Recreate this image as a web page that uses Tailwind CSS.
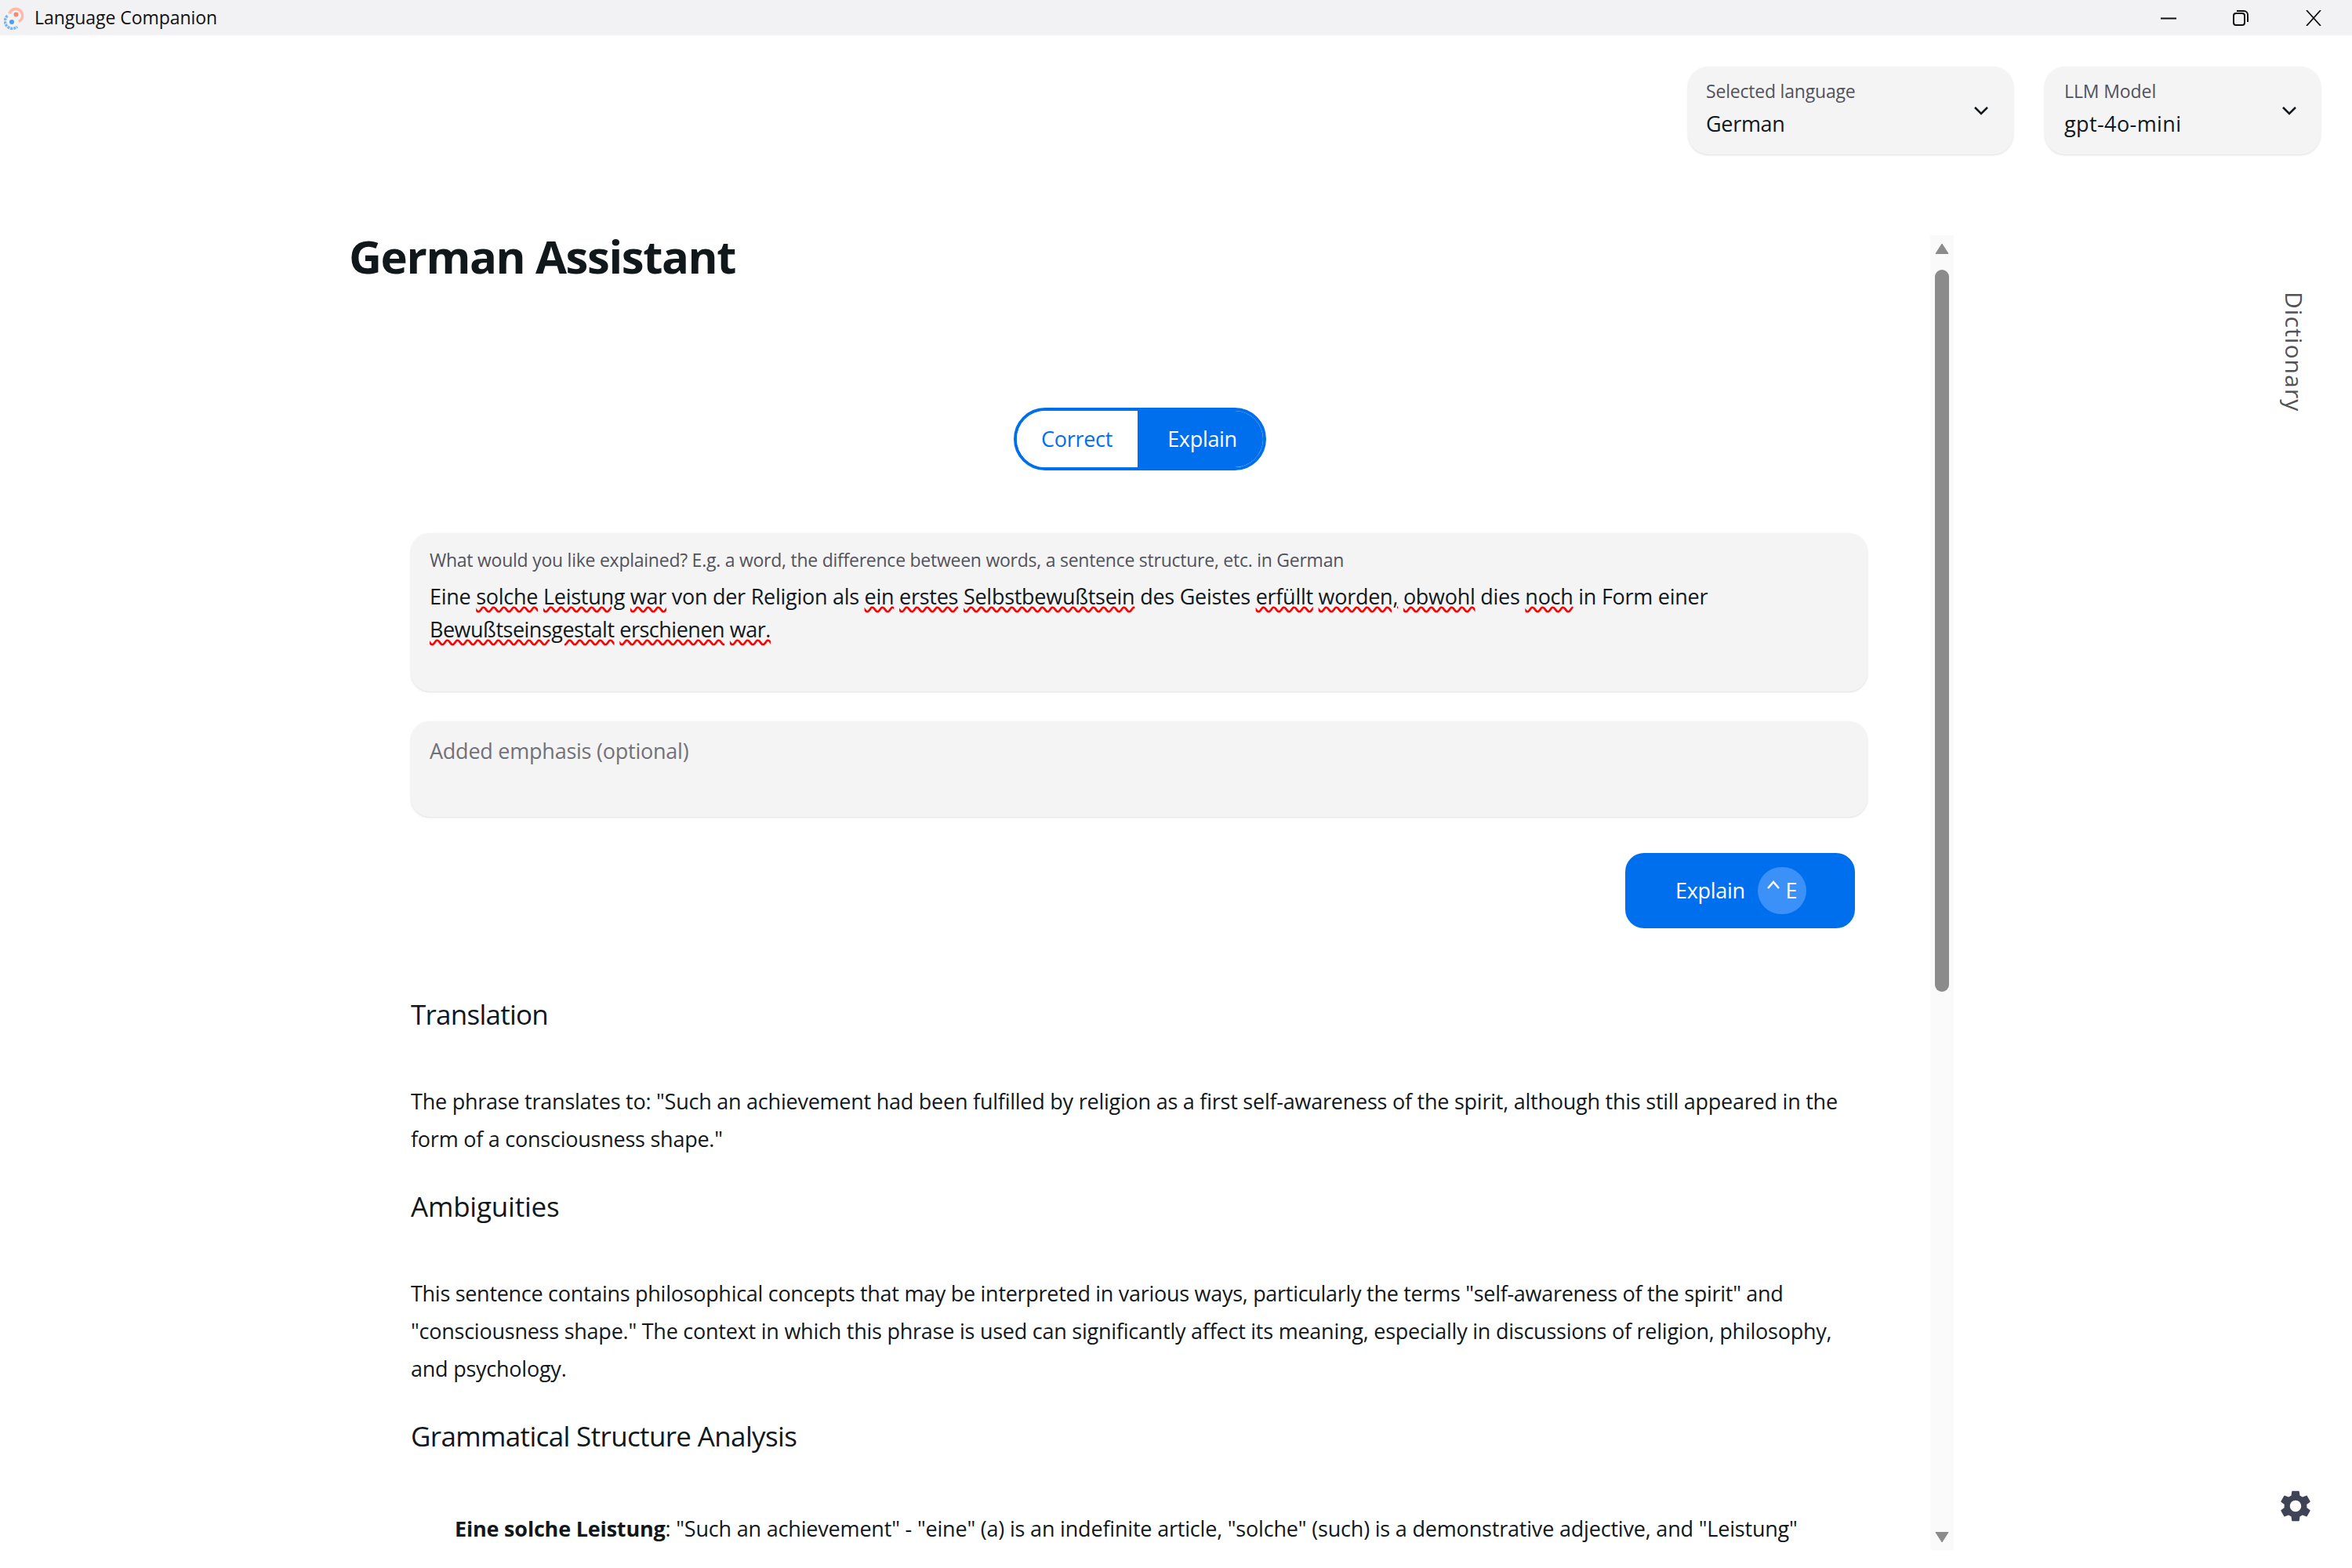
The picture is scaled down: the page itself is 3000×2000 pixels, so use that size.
<!DOCTYPE html>
<html lang="en">

<head>
    <meta charset="UTF-8">
    <title>Language Companion</title>
    <script src="https://cdn.jsdelivr.net/npm/@tailwindcss/browser@4"></script>
</head>

<body class="w-[3000px] h-[2000px] overflow-hidden bg-white font-['Open_Sans',sans-serif] text-[#11181c]">
    <!-- Title bar -->
    <div class="h-[45px] bg-[#f2f2f5] flex items-center">
        <svg class="ml-[5px] w-[26px] h-[30px]" viewBox="0 0 26 30" fill="none">
            <path d="M7 9.500 A8.500 8.500 0 1 1 19 19.500" stroke="#f7bcaa" stroke-width="3.500" />
            <circle cx="15.500" cy="10.500" r="3" fill="#f08a72" />
            <path d="M4.500 12 A8.500 8.500 0 0 0 17 26" stroke="#74b6f6" stroke-width="3.500" stroke-dasharray="3 1" />
            <circle cx="10" cy="20" r="3" fill="#4a9ff0" />
        </svg>
        <span class="ml-[13px] text-[23px] tracking-[-0.05px] text-[#111]">Language Companion</span>
        <div class="ml-auto flex items-center">
            <svg class="w-[20px] h-[20px]" viewBox="0 0 20 20"><path d="M0 10.500h20" stroke="#111" stroke-width="2" /></svg>
            <svg class="ml-[72px] w-[20px] h-[20px]" viewBox="0 0 20 20" fill="none" stroke="#111" stroke-width="2"><rect x="1" y="4" width="14" height="15" rx="3" /><path d="M5 1h9a5 5 0 0 1 5 5v9" /></svg>
            <svg class="ml-[73px] mr-[39px] w-[20px] h-[20px]" viewBox="0 0 20 20" stroke="#111" stroke-width="1.800"><path d="M1 0l18 20M19 0L1 20" /></svg>
        </div>
    </div>

    <!-- Dropdowns -->
    <div class="flex justify-end gap-[40px] pt-[40px] pr-[40px]">
        <div class="w-[415px] h-[112px] rounded-[26px] bg-[#f4f4f5] shadow-sm pl-[23px] pr-[31px] flex items-center justify-between">
            <div class="pb-[4px]">
                <div class="text-[23px] leading-[32px] tracking-[-0.2px] text-[#52525b]">Selected language</div>
                <div class="text-[27px] leading-[40px] mt-[6px] tracking-[-0.3px] text-[#11181c]">German</div>
            </div>
            <svg class="w-[20px] h-[12px]" viewBox="0 0 20 12" fill="none" stroke="#11181c" stroke-width="2.500"><path d="M2 2l8 8 8-8" /></svg>
        </div>
        <div class="w-[352px] h-[112px] rounded-[26px] bg-[#f4f4f5] shadow-sm pl-[25px] pr-[30px] flex items-center justify-between">
            <div class="pb-[4px]">
                <div class="text-[23px] leading-[32px] tracking-[-0.1px] text-[#52525b]">LLM Model</div>
                <div class="text-[27px] leading-[40px] mt-[6px] tracking-[0.4px] text-[#11181c]">gpt-4o-mini</div>
            </div>
            <svg class="w-[20px] h-[12px]" viewBox="0 0 20 12" fill="none" stroke="#11181c" stroke-width="2.500"><path d="M2 2l8 8 8-8" /></svg>
        </div>
    </div>

    <div class="flex pl-[445px] mt-[103px]">
        <!-- Scrolling content -->
        <div class="w-[2017px] -mt-[13px] h-[1690px] overflow-hidden">
            <h1 class="text-[58px] leading-[80px] font-bold tracking-[-1.4px]">German Assistant</h1>

            <div class="flex justify-center mt-[153px]">
                <div class="flex h-[80px] w-[322px] rounded-full overflow-hidden border-[4px] border-[#006fee] text-[27px] tracking-[-0.3px]">
                    <div class="w-[154px] bg-white text-[#006fee] flex items-center justify-center">Correct</div>
                    <div class="flex-1 bg-[#006fee] text-white flex items-center justify-center pl-[6px]">Explain</div>
                </div>
            </div>

            <div class="ml-[79px] w-[1858px]">
                <div class="mt-[80px] h-[202px] rounded-[24px] bg-[#f4f4f5] shadow-sm px-[24px] pt-[18px]">
                    <div class="text-[23px] leading-[32px] tracking-[-0.25px] text-[#52525b]">What would you like explained? E.g. a word, the difference between words, a sentence structure, etc. in German</div>
                    <div class="mt-[10px] text-[27px] leading-[42px] tracking-[-0.27px] text-[#11181c]">
                        Eine <span class="underline decoration-wavy decoration-[#f00]">solche</span> <span class="underline decoration-wavy decoration-[#f00]">Leistung</span> <span class="underline decoration-wavy decoration-[#f00]">war</span> von der Religion als <span class="underline decoration-wavy decoration-[#f00]">ein</span> <span class="underline decoration-wavy decoration-[#f00]">erstes</span> <span class="underline decoration-wavy decoration-[#f00]">Selbstbewußtsein</span> des Geistes <span class="underline decoration-wavy decoration-[#f00]">erfüllt</span> <span class="underline decoration-wavy decoration-[#f00]">worden,</span> <span class="underline decoration-wavy decoration-[#f00]">obwohl</span> dies <span class="underline decoration-wavy decoration-[#f00]">noch</span> in Form einer<br>
                        <span class="underline decoration-wavy decoration-[#f00] tracking-[-0.5px]">Bewußtseinsgestalt</span> <span class="underline decoration-wavy decoration-[#f00] tracking-[-0.5px]">erschienen</span> <span class="underline decoration-wavy decoration-[#f00] tracking-[-0.5px]">war.</span>
                    </div>
                </div>

                <div class="mt-[38px] h-[122px] rounded-[24px] bg-[#f4f4f5] shadow-sm px-[24px] pt-[18px] text-[27px] leading-[40px] tracking-[-0.24px] text-[#71717a]">Added emphasis (optional)</div>

                <div class="flex justify-end mt-[46px] pr-[16px]">
                    <div class="w-[293px] h-[96px] rounded-[24px] bg-[#006fee] text-white flex items-center pl-[64px] text-[27px] tracking-[-0.3px]">
                        <span>Explain</span>
                        <span class="ml-[16px] w-[62px] h-[60px] rounded-full bg-[#3b91f7] flex items-center justify-center text-[27px]">
                            <svg class="w-[18px] h-[12px] mb-[14px] mr-[6px]" viewBox="0 0 18 12" fill="none" stroke="#fff" stroke-width="2.500"><path d="M2 10l7-8 7 8" /></svg>E
                        </span>
                    </div>
                </div>

                <!-- Answer -->
                <h2 class="mt-[86px] text-[35px] leading-[48px] tracking-[-0.75px]">Translation</h2>
                <p class="mt-[63px] text-[27px] leading-[48px] tracking-[-0.24px]">The phrase translates to: "Such an achievement had been fulfilled by religion as a first self-awareness of the spirit, although this still appeared in the<br>form of a consciousness shape."</p>
                <h2 class="mt-[38px] text-[35px] leading-[48px] tracking-[-0.2px]">Ambiguities</h2>
                <p class="mt-[63px] text-[27px] leading-[48px] tracking-[-0.29px]">This sentence contains philosophical concepts that may be interpreted in various ways, particularly the terms "self-awareness of the spirit" and<br><span class="tracking-[-0.24px]">"consciousness shape." The context in which this phrase is used can significantly affect its meaning, especially in discussions of religion, philosophy,<br>and psychology.</span></p>
                <h2 class="mt-[38px] text-[35px] leading-[48px] tracking-[-0.65px]">Grammatical Structure Analysis</h2>
                <p class="mt-[70px] pl-[56px] text-[27px] leading-[48px] tracking-[-0.19px]"><b>Eine solche Leistung</b>: "Such an achievement" - "eine" (a) is an indefinite article, "solche" (such) is a demonstrative adjective, and "Leistung"</p>
            </div>
        </div>

        <!-- Scrollbar -->
        <div class="w-[30px] h-[1677px] bg-[#fafafa] flex flex-col items-center pt-[10px]">
            <svg class="w-[18px] h-[14px]" viewBox="0 0 18 14" fill="#8b8b8b"><path d="M9 1l8 12.500H1z" stroke="#8b8b8b" stroke-linejoin="round" /></svg>
            <div class="mt-[20px] w-[18px] h-[921px] rounded-full bg-[#8b8b8b]"></div>
            <svg class="mt-auto mb-[9px] w-[18px] h-[14px]" viewBox="0 0 18 14" fill="#8b8b8b"><path d="M9 13L17 0.500H1z" stroke="#8b8b8b" stroke-linejoin="round" /></svg>
        </div>

        <!-- Right rail -->
        <div class="flex-1 h-[1677px] flex flex-col items-end pr-[60px]">
            <div class="mt-[72px] -mr-[3px] [writing-mode:vertical-rl] text-[30px] leading-[34px] tracking-[1.1px] text-[#52525b]">Dictionary</div>
            <svg class="mt-auto mb-[32px] -mr-[12px] w-[48px] h-[48px]" viewBox="0 0 24 24" fill="#3f4356"><path d="M19.140 12.940c.04-.3.060-.61.060-.94 0-.32-.02-.64-.07-.94l2.030-1.580a.490.490 0 0 0 .12-.61l-1.920-3.320a.488.488 0 0 0-.59-.22l-2.390.96c-.5-.38-1.030-.7-1.620-.94l-.36-2.540a.484.484 0 0 0-.48-.41h-3.840c-.24 0-.43.170-.47.410l-.36 2.540c-.59.240-1.130.570-1.620.94l-2.390-.96c-.22-.08-.47 0-.59.220L2.740 8.870c-.12.210-.08.470.12.610l2.030 1.580c-.05.300-.09.630-.09.940s.02.640.07.940l-2.030 1.580a.490.490 0 0 0-.12.610l1.920 3.320c.12.220.37.290.59.220l2.390-.96c.5.380 1.030.7 1.620.94l.36 2.540c.05.240.24.410.48.410h3.840c.24 0 .44-.17.470-.41l.36-2.540c.59-.24 1.130-.56 1.620-.94l2.390.96c.22.080.47 0 .59-.22l1.920-3.320c.12-.22.070-.47-.12-.61l-2.010-1.580zM12 15.600c-1.980 0-3.600-1.620-3.600-3.600s1.620-3.600 3.600-3.600 3.600 1.620 3.600 3.600-1.620 3.600-3.600 3.600z" /></svg>
        </div>
    </div>
</body>

</html>
